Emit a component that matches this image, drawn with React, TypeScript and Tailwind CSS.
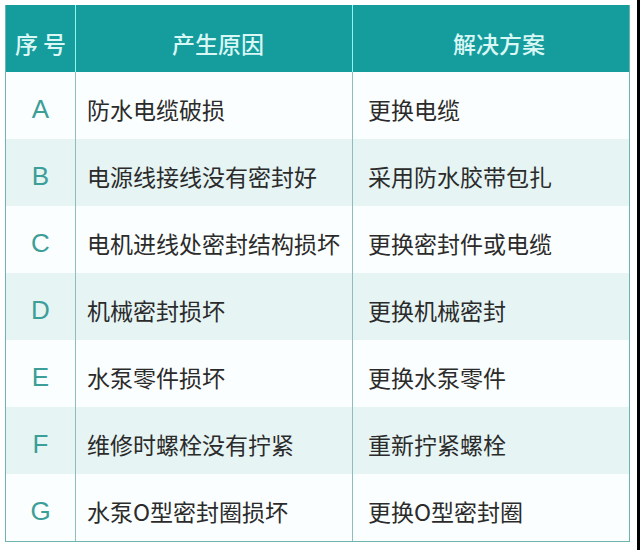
const rows = [
  ["A", "防水电缆破损", "更换电缆"],
  ["B", "电源线接线没有密封好", "采用防水胶带包扎"],
  ["C", "电机进线处密封结构损坏", "更换密封件或电缆"],
  ["D", "机械密封损坏", "更换机械密封"],
  ["E", "水泵零件损坏", "更换水泵零件"],
  ["F", "维修时螺栓没有拧紧", "重新拧紧螺栓"],
  ["G", "水泵O型密封圈损坏", "更换O型密封圈"],
]

export default function App() {
  return (
    <div
      className="w-[640px] h-[550px] bg-white flex"
      style={{ fontFamily: '"Noto Sans CJK SC", "Noto Sans", sans-serif' }}
    >
      <div className="w-[637px] pt-[5px] pl-[5px]">
        <div className="w-[625px] border border-[#6fb3b0] border-t-0">
          <div className="grid grid-cols-[70px_277px_1fr] h-[67px] bg-[#159c9d] text-[#d9f7f4] text-[23px] font-medium">
            <div className="flex items-center justify-center pt-[9px] border-r border-[#8ef5f0]">
              序 号
            </div>
            <div className="flex items-center justify-center pt-[9px] pl-2 border-r border-[#8ef5f0]">
              产生原因
            </div>
            <div className="flex items-center justify-center pt-[9px] pl-4">
              解决方案
            </div>
          </div>
          {rows.map(([id, cause, fix], i) => (
            <div
              key={id}
              className={
                "grid grid-cols-[70px_277px_1fr] h-[67px] text-[23px] " +
                (i % 2 === 1 ? "bg-[#e6f4f4]" : "bg-[#fbfefe]")
              }
            >
              <div
                className="flex items-center justify-center pt-[8px] border-r border-[#8fbdbb] text-[#3c9e98] text-[26px]"
                style={{ fontFamily: '"Liberation Sans", Arial, sans-serif' }}
              >
                {id}
              </div>
              <div className="flex items-center pl-[11px] pt-[8px] border-r border-[#8fbdbb] text-[#2b2b2b]">
                {cause}
              </div>
              <div className="flex items-center pl-[15px] pt-[8px] text-[#2b2b2b]">
                {fix}
              </div>
            </div>
          ))}
        </div>
      </div>
      <div className="w-[3px] bg-black" />
    </div>
  )
}
